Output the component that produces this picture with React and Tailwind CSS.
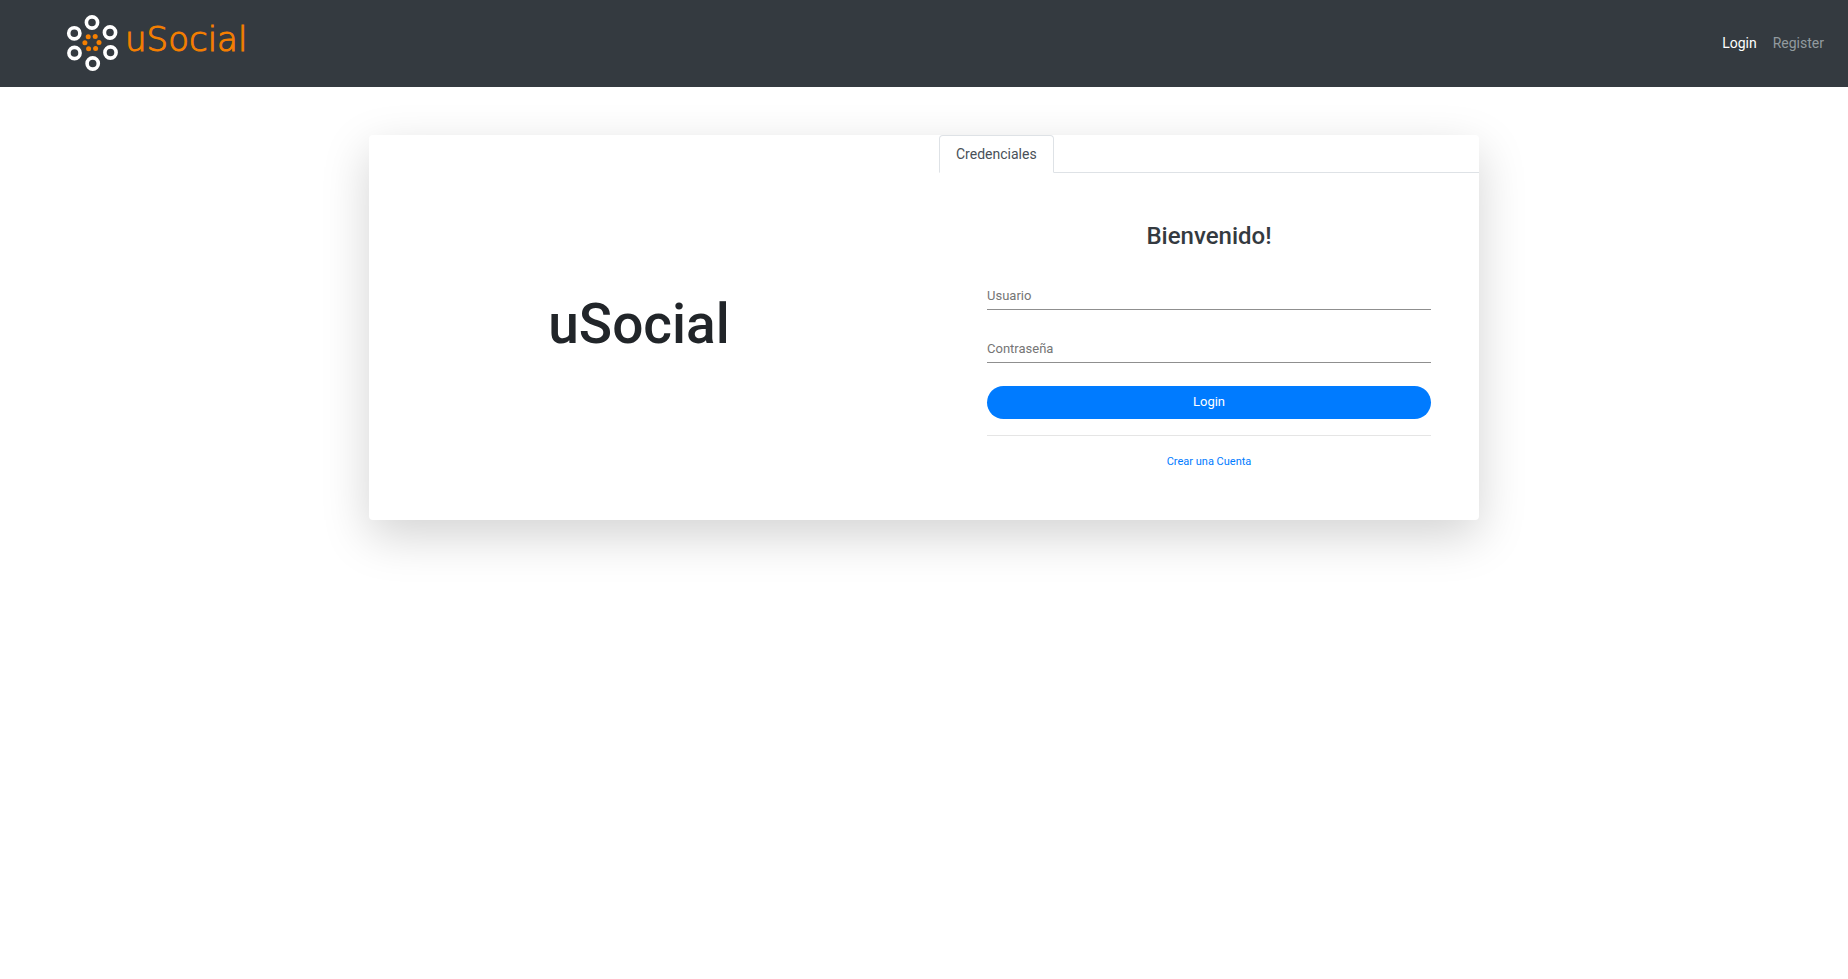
const ring = [
  [92, 22.5],
  [110, 32.5],
  [110.5, 52.5],
  [92.7, 63.5],
  [74.5, 53],
  [74.3, 33.3],
];
const dots = [
  [88.2, 36.7],
  [95.2, 36.5],
  [99, 42.6],
  [95.6, 48.6],
  [88.6, 48.7],
  [84.9, 42.8],
];

function Logo() {
  return (
    <a href="#" aria-label="uSocial" className="flex items-center gap-[5px] pb-[2px]">
      <svg viewBox="66 14 54 58" className="h-[58px] w-[54px]" aria-hidden="true">
        {ring.map(([x, y]) => (
          <circle key={x + "-" + y} cx={x} cy={y} r="5.6" fill="none" stroke="#fff" strokeWidth="3.6" />
        ))}
        {dots.map(([x, y]) => (
          <circle key={x + "-" + y} cx={x} cy={y} r="2.5" fill="#f57f00" />
        ))}
      </svg>
      <span className="pb-2 font-['DejaVu_Sans',sans-serif] text-[34px] leading-10 font-extralight text-[#f57f00] [-webkit-text-stroke:1px_#f57f00]">
        uSocial
      </span>
    </a>
  );
}

export default function App() {
  return (
    <div className="min-h-screen bg-white font-[Roboto,sans-serif] text-sm leading-5 text-[#212529]">
      <header className="flex h-[87px] items-center justify-between bg-[#343a40] pr-6 pl-[66px]">
        <Logo />
        <nav className="flex gap-4 leading-[21px]">
          <a href="#" className="text-white">Login</a>
          <a href="#" className="text-[#929a9f]">Register</a>
        </nav>
      </header>

      <main className="mx-auto mt-12 grid max-w-[1110px] grid-cols-2 gap-[30px] rounded bg-white shadow-[0_16px_48px_rgba(0,0,0,0.175)]">
        <section className="flex items-center justify-center">
          <h1 className="pb-2 text-[55px] leading-[66px] font-medium">uSocial</h1>
        </section>

        <section>
          <div role="tablist" className="flex border-b border-[#dee2e6]">
            <button
              type="button"
              role="tab"
              aria-selected="true"
              className="-mb-px rounded-t border border-[#dee2e6] border-b-white bg-white px-4 py-2 text-[#495057]"
            >
              Credenciales
            </button>
          </div>

          <form className="flex flex-col p-12 text-[13px]" onSubmit={(e) => e.preventDefault()}>
            <h2 className="mb-[30px] text-center text-2xl leading-[30px] font-medium text-[#343a40]">Bienvenido!</h2>
            <input
              type="text"
              aria-label="Usuario"
              placeholder="Usuario"
              className="mb-6 h-[29px] border-b border-[#8f8f8f] outline-none placeholder:text-[#757575]"
            />
            <input
              type="password"
              aria-label="Contraseña"
              placeholder="Contraseña"
              className="mb-[23px] h-[29px] border-b border-[#8f8f8f] outline-none placeholder:text-[#757575]"
            />
            <button type="submit" className="h-[33px] rounded-full bg-[#007bff] pb-px text-white">
              Login
            </button>
            <hr className="my-4 border-black/10" />
            <a href="#" className="text-center text-[11px] leading-5 text-[#007bff]">Crear una Cuenta</a>
          </form>
        </section>
      </main>
    </div>
  );
}
